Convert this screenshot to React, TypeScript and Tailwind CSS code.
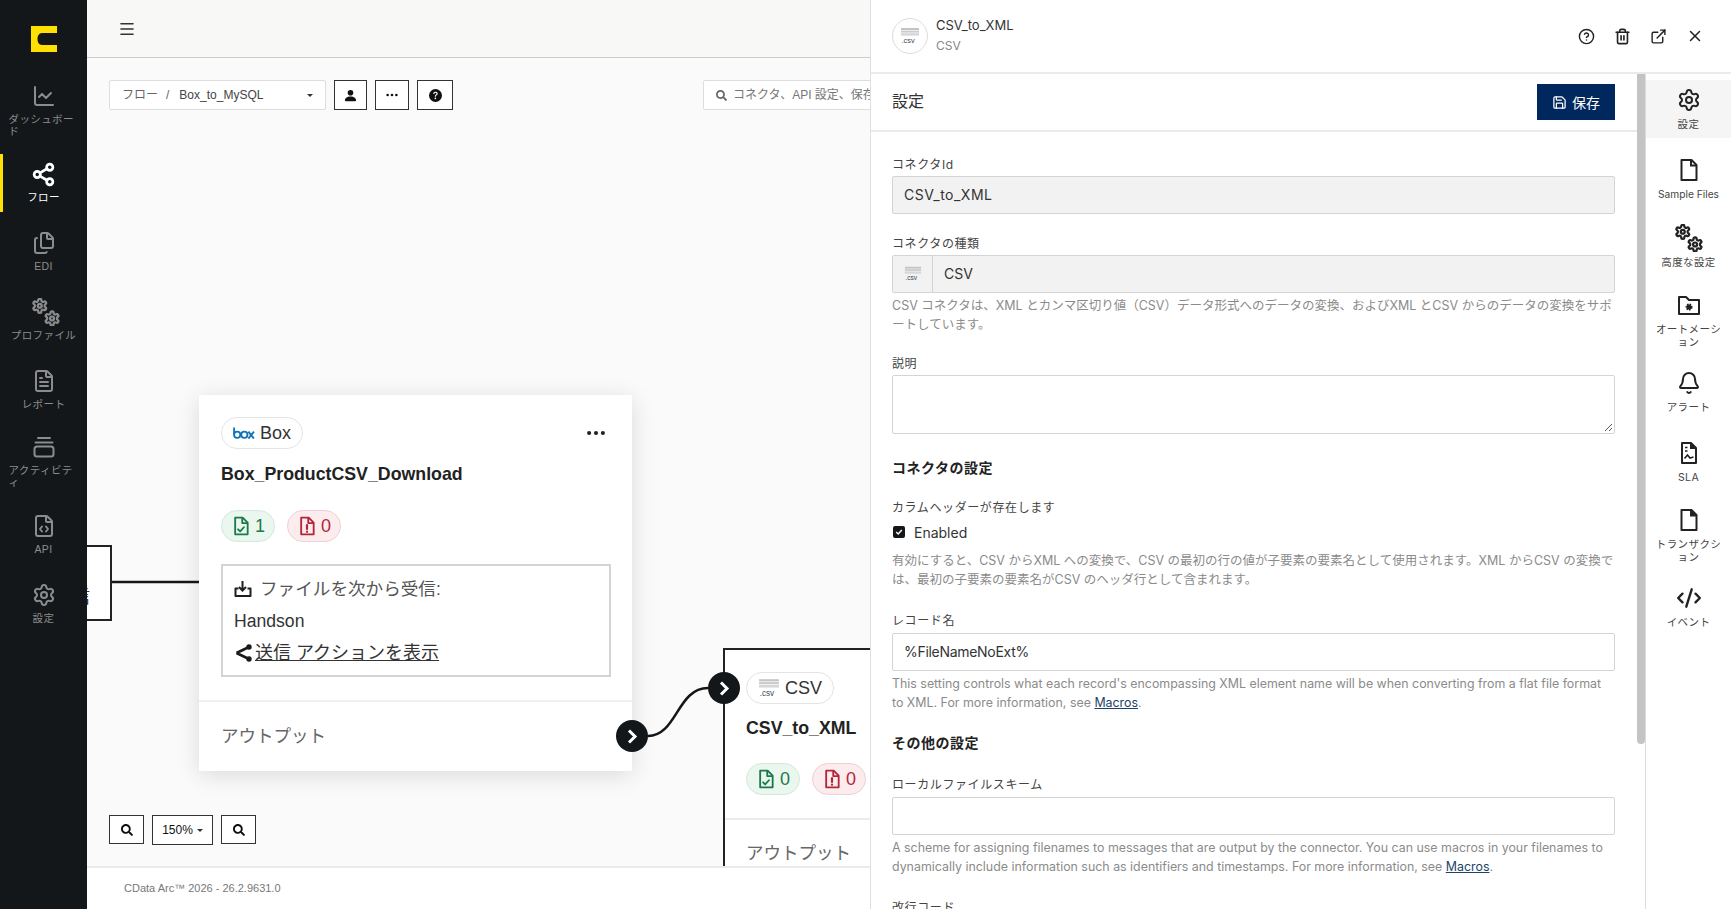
import type { ReactNode } from "react";
import {
  Bell,
  ChartLine,
  CircleHelp,
  CodeXml,
  ExternalLink,
  FileCode,
  FileText,
  Files,
  Menu,
  Save,
  Settings,
  Share2,
  Trash2,
  X,
} from "lucide-react";
import { BsPersonFill, BsQuestionCircleFill, BsThreeDots } from "react-icons/bs";
import { FaSearch } from "react-icons/fa";

const gearPath =
  "M12.22 2h-.44a2 2 0 0 0-2 2v.18a2 2 0 0 1-1 1.73l-.43.25a2 2 0 0 1-2 0l-.15-.08a2 2 0 0 0-2.73.73l-.22.38a2 2 0 0 0 .73 2.73l.15.1a2 2 0 0 1 1 1.72v.51a2 2 0 0 1-1 1.74l-.15.09a2 2 0 0 0-.73 2.73l.22.38a2 2 0 0 0 2.73.73l.15-.08a2 2 0 0 1 2 0l.43.25a2 2 0 0 1 1 1.73V20a2 2 0 0 0 2 2h.44a2 2 0 0 0 2-2v-.18a2 2 0 0 1 1-1.73l.43-.25a2 2 0 0 1 2 0l.15.08a2 2 0 0 0 2.73-.73l.22-.39a2 2 0 0 0-.73-2.73l-.15-.08a2 2 0 0 1-1-1.74v-.5a2 2 0 0 1 1-1.74l.15-.09a2 2 0 0 0 .73-2.73l-.22-.38a2 2 0 0 0-2.73-.73l-.15.08a2 2 0 0 1-2 0l-.43-.25a2 2 0 0 1-1-1.73V4a2 2 0 0 0-2-2z";

const Gears = () => (
  <svg width="28" height="28" viewBox="0 0 36 36" fill="none" stroke="currentColor" strokeWidth="3.2" className="shrink-0">
    <g transform="translate(-0.8 -0.8) scale(0.9)">
      <path d={gearPath} />
      <circle cx="12" cy="12" r="2.8" />
    </g>
    <g transform="translate(15 15.5) scale(0.9)">
      <path d={gearPath} />
      <circle cx="12" cy="12" r="2.8" />
    </g>
  </svg>
);

const ActivityIcon = () => (
  <svg width="24" height="24" viewBox="0 0 24 24" fill="none" stroke="currentColor" strokeWidth="2" strokeLinecap="round">
    <path d="M6 3h12M3.5 7.5h17" />
    <rect x="2.5" y="11.5" width="19" height="10" rx="2.5" />
  </svg>
);

const FolderGear = () => (
  <svg width="24" height="24" viewBox="0 0 24 24" fill="none" stroke="currentColor" strokeWidth="2">
    <path d="M2 4h7l3 3h10v14H2z" strokeLinejoin="round" />
    <circle cx="12" cy="14" r="2.6" fill="currentColor" strokeWidth="1.8" strokeDasharray="1.5 1" />
  </svg>
);

const SlaFile = () => (
  <svg width="24" height="24" viewBox="0 0 24 24" fill="none" stroke="currentColor" strokeWidth="2">
    <path d="M5 2h9l5 5v15H5z" strokeLinejoin="round" />
    <path d="M14 2v5h5" fill="currentColor" />
    <path d="M8 6.5h2.5M8 10h2.5" strokeWidth="1.6" />
    <path d="M7.5 17.5l3-3.5 2.5 3 3.5-1" strokeWidth="1.6" />
  </svg>
);

const TransactionFile = () => (
  <svg width="24" height="24" viewBox="0 0 24 24" fill="none" stroke="currentColor" strokeWidth="2">
    <path d="M4.5 2h10l5 5v15h-15z" strokeLinejoin="round" />
    <path d="M14 2v5.5h5.5" fill="currentColor" />
  </svg>
);

const SampleFile = () => (
  <svg width="24" height="24" viewBox="0 0 24 24" fill="none" stroke="currentColor" strokeWidth="2">
    <path d="M4.5 2h10l5 5v15h-15z" strokeLinejoin="round" />
    <path d="M14 2v5.5h5.5" />
  </svg>
);

const BoxLogo = () => (
  <svg width="22" height="12" viewBox="0 0 24 13" fill="none" stroke="#1072b8" strokeWidth="2" className="shrink-0">
    <path d="M1.2 0.5v8" />
    <circle cx="4.6" cy="8.4" r="3.4" />
    <circle cx="12.4" cy="8.4" r="3.4" />
    <path d="M16.8 5l6 7.6M22.8 5l-6 7.6" />
  </svg>
);

const CsvLogo = ({ size = 20 }: { size?: number }) => (
  <svg width={size} height={size} viewBox="0 0 20 20" className="shrink-0">
    <rect x="1" y="2" width="18" height="2" fill="#c4c4c4" />
    <rect x="1" y="4.6" width="18" height="2" fill="#cccccc" />
    <rect x="1" y="7.2" width="18" height="2.4" fill="#d6d6d6" />
    <text x="1.5" y="17" fontSize="7.4" fill="#3c4b5f" fontFamily="Liberation Sans">.csv</text>
  </svg>
);

const StatusFile = ({ type }: { type: "ok" | "err" }) => (
  <svg width="20" height="20" viewBox="0 0 24 24" fill="none" stroke="currentColor" strokeWidth="2.2" strokeLinejoin="round">
    <path d="M5 2h9l6 6v14H5z" />
    <path d="M13.5 2v6.5H20" />
    {type === "ok" ? (
      <path d="M8.5 16l2.5 2.5 4.5-5" strokeLinecap="round" />
    ) : (
      <>
        <path d="M12 11v4.5" strokeLinecap="round" strokeWidth="2.6" />
        <path d="M12 18.6v.4" strokeLinecap="round" strokeWidth="2.6" />
      </>
    )}
  </svg>
);

const SendIcon = () => (
  <svg width="19" height="18" viewBox="0 0 19 18" fill="#1a1a1a" stroke="#1a1a1a" strokeWidth="2.6" className="shrink-0">
    <path d="M2.5 9L15 3M2.5 9L15 15" fill="none" />
    <circle cx="15" cy="3" r="1.4" />
    <circle cx="15" cy="15" r="1.4" />
  </svg>
);

const ReceiveIcon = () => (
  <svg width="18" height="18" viewBox="0 0 18 18" fill="none" stroke="#1f1f1f" strokeWidth="2" className="shrink-0">
    <path d="M8.5 1v9M5 7l3.5 3.5L12 7" />
    <path d="M4.5 8.5H1.5v7.5h15V8.5h-3" strokeLinejoin="round" />
  </svg>
);

const sideItems = [
  { label: "ダッシュボー\nド", icon: <ChartLine size={24} strokeWidth={2} />, box: "h-[68px] mb-[10px]", align: "text-left" },
  { label: "フロー", icon: <Share2 size={25} strokeWidth={2.6} />, box: "h-[58px] mb-[11px]", align: "text-center", active: true },
  { label: "EDI", icon: <Files size={24} strokeWidth={2} />, box: "h-[58px] mb-[11px]", align: "text-center" },
  { label: "プロファイル", icon: <div className="ml-1"><Gears /></div>, box: "h-[58px] mb-[11px]", align: "text-center" },
  { label: "レポート", icon: <FileText size={24} strokeWidth={2} />, box: "h-[58px] mb-[8px]", align: "text-center" },
  { label: "アクティビテ\nィ", icon: <ActivityIcon />, box: "h-[68px] mb-[11px]", align: "text-left" },
  { label: "API", icon: <FileCode size={24} strokeWidth={2} />, box: "h-[58px] mb-[11px]", align: "text-center" },
  { label: "設定", icon: <Settings size={24} strokeWidth={2} />, box: "h-[58px]", align: "text-center" },
];

const railItems = [
  { label: "設定", icon: <Settings size={24} strokeWidth={2} />, box: "h-[58px] mb-[12px] bg-[#f5f5f5]", text: "text-[10.5px] tracking-[0.4px]" },
  { label: "Sample Files", icon: <SampleFile />, box: "h-[58px] mb-[10px]", text: "text-[10.2px] tracking-[0px]" },
  { label: "高度な設定", icon: <Gears />, box: "h-[58px] mb-[9px]", text: "text-[10.5px] tracking-[0.4px]" },
  { label: "オートメーシ\nョン", icon: <FolderGear />, box: "h-[70px] mb-[8px]", text: "text-[10.5px] tracking-[0.4px]" },
  { label: "アラート", icon: <Bell size={24} strokeWidth={2} />, box: "h-[58px] mb-[12px]", text: "text-[10.5px] tracking-[0.4px]" },
  { label: "SLA", icon: <SlaFile />, box: "h-[58px] mb-[9px]", text: "text-[10.5px] tracking-[0.4px]" },
  { label: "トランザクシ\nョン", icon: <TransactionFile />, box: "h-[70px] mb-[8px]", text: "text-[10.5px] tracking-[0.4px]" },
  { label: "イベント", icon: <CodeXml size={26} strokeWidth={2.2} />, box: "h-[58px]", text: "text-[10.5px] tracking-[0.4px]" },
];

function Sidebar() {
  return (
    <aside className="w-[87px] shrink-0 bg-[#14171a] flex flex-col">
      <div className="h-[76px] shrink-0 pl-[31px] pt-[26px]">
        <svg width="26" height="26" viewBox="0 0 26 26">
          <path d="M0 0H26V7H11C8 7 6.5 10 6.5 13C6.5 16 8 19 11 19H26V26H0Z" fill="#ffe000" />
        </svg>
      </div>
      {sideItems.map((item) => (
        <div
          key={item.label}
          className={`${item.box} flex flex-col items-center pt-2 border-l-[3px] pr-[3px] ${
            item.active ? "border-[#ffe000] text-white" : "border-transparent text-[#8c8c8c]"
          }`}
        >
          <div className="h-6 flex items-center justify-center">{item.icon}</div>
          <div className={`${item.align} mt-[5px] w-[70px] text-[10.5px] leading-[12px] whitespace-pre-line tracking-[0.4px]`}>
            {item.label}
          </div>
        </div>
      ))}
    </aside>
  );
}

function Pill({ logo, name, className }: { logo: ReactNode; name: string; className: string }) {
  return (
    <div className={`${className} h-8 inline-flex items-center gap-[5px] rounded-full border border-[#e4e4e4] bg-white pl-[11px] text-[18px] text-[#333]`}>
      {logo}
      {name}
    </div>
  );
}

function Badges({ ok, err }: { ok: number; err: number }) {
  return (
    <div className="flex gap-3">
      <div className="w-[54px] h-8 flex items-center justify-center gap-1 rounded-full border border-[#d3e9dc] bg-[#eaf7ef] text-[#1c7a49] text-[18px]">
        <StatusFile type="ok" />
        {ok}
      </div>
      <div className="w-[54px] h-8 flex items-center justify-center gap-1 rounded-full border border-[#efd0d4] bg-[#fcecee] text-[#b3263a] text-[18px]">
        <StatusFile type="err" />
        {err}
      </div>
    </div>
  );
}

function NodeHandle({ className }: { className: string }) {
  return (
    <div className={`absolute ${className} w-8 h-8 rounded-full bg-[#14171a] flex items-center justify-center`}>
      <svg width="13" height="15" viewBox="0 0 13 15" fill="none" stroke="white" strokeWidth="3">
        <path d="M3 1.5L9 7.5L3 13.5" />
      </svg>
    </div>
  );
}

function ToolButton({ children, className }: { children: ReactNode; className: string }) {
  return (
    <div className={`${className} flex items-center justify-center border border-[#333] bg-white text-[#111]`}>
      {children}
    </div>
  );
}

function Canvas() {
  return (
    <div className="relative flex-1 min-h-0 overflow-hidden bg-[#fafafa]">
      {/* toolbar */}
      <div className="absolute left-[22px] top-[22px] flex gap-2 z-20">
        <div className="w-[217px] h-[30px] flex items-center border border-[#dddddd] rounded-[2px] bg-white pl-3 pr-3 text-[12px] text-[#444]">
          <span className="text-[#666]">フロー</span>
          <span className="ml-2 text-[#666]">/</span>
          <span className="ml-[10px] flex-1">Box_to_MySQL</span>
          <span className="w-0 h-0 border-x-[3px] border-x-transparent border-t-[3px] border-t-[#333]" />
        </div>
        <ToolButton className="w-[33px] h-[30px]"><BsPersonFill size={15} /></ToolButton>
        <ToolButton className="w-[34px] h-[30px]"><BsThreeDots size={14} /></ToolButton>
        <ToolButton className="w-[36px] h-[30px]"><BsQuestionCircleFill size={13} /></ToolButton>
      </div>
      <div className="absolute left-[616px] top-[22px] w-[260px] h-[30px] flex items-center gap-[6px] border border-[#dddddd] rounded-[2px] bg-white pl-3 text-[12px] text-[#777] whitespace-nowrap z-20">
        <FaSearch size={11} className="text-[#666] shrink-0" />
        <span>コネクタ、API 設定、保存済みの項目を検索</span>
      </div>

      {/* left stub node */}
      <div className="absolute left-[-40px] top-[487px] w-[65px] h-[76px] border-2 border-[#222] bg-white flex items-center justify-end pr-[18px] text-[18px] text-[#333] overflow-hidden">
        <span className="-translate-x-[2px] translate-y-[14px]">信</span>
      </div>
      <svg className="absolute left-0 top-0" width="783" height="808" fill="none" stroke="#14171a">
        <path d="M25 524H113" strokeWidth="2.5" />
        <path d="M561 678C590 678 590 630 621 630" strokeWidth="2.5" />
      </svg>

      {/* Box node */}
      <div className="absolute left-[112px] top-[337px] w-[433px] h-[376px] bg-white shadow-[0_4px_22px_rgba(0,0,0,0.13)]">
        <Pill logo={<BoxLogo />} name="Box" className="absolute left-[22px] top-[22px] w-[82px]" />
        <div className="absolute right-[25px] top-[27px]"><BsThreeDots size={22} className="text-[#222]" /></div>
        <div className="absolute left-[22px] top-[68px] text-[17.75px] leading-[22px] font-bold text-[#222]">Box_ProductCSV_Download</div>
        <div className="absolute left-[22px] top-[115px]"><Badges ok={1} err={0} /></div>
        <div className="absolute left-[22px] top-[169px] w-[390px] h-[113px] border-2 border-[#d4d4d4] px-[11px] pt-[7px] text-[17.6px] leading-[32px] text-[#333]">
          <div className="flex items-center gap-[8px] text-[#555]"><ReceiveIcon />ファイルを次から受信:</div>
          <div>Handson</div>
          <div className="flex items-center gap-[2px]">
            <SendIcon />
            <span className="underline text-[18px]">送信 アクションを表示</span>
          </div>
        </div>
        <div className="absolute left-0 right-0 top-[305px] border-t-2 border-[#f0f0f0]" />
        <div className="absolute left-[22px] top-[328px] text-[17.5px] leading-[26px] text-[#666]">アウトプット</div>
      </div>
      <NodeHandle className="left-[529px] top-[662px]" />

      {/* CSV node */}
      <div className="absolute left-[636px] top-[590px] w-[300px] h-[260px] border-2 border-[#222] bg-white">
        <Pill logo={<CsvLogo size={22} />} name="CSV" className="absolute left-[21px] top-[22px] w-[88px]" />
        <div className="absolute left-[21px] top-[67px] text-[17.75px] leading-[22px] font-bold text-[#222]">CSV_to_XML</div>
        <div className="absolute left-[21px] top-[113px]"><Badges ok={0} err={0} /></div>
        <div className="absolute left-0 right-0 top-[168px] border-t-2 border-[#ececec]" />
        <div className="absolute left-[21px] top-[190px] text-[17.5px] leading-[26px] text-[#666]">アウトプット</div>
      </div>
      <NodeHandle className="left-[621px] top-[614px]" />

      {/* zoom controls */}
      <div className="absolute left-[22px] top-[757px] flex gap-2 items-start z-20">
        <ToolButton className="w-[35px] h-[29px]"><FaSearch size={12} /></ToolButton>
        <ToolButton className="w-[61px] h-[30px] text-[12px] gap-1 bg-[#fafafa]">
          150%
          <span className="w-0 h-0 border-x-[3px] border-x-transparent border-t-[3px] border-t-[#333]" />
        </ToolButton>
        <ToolButton className="w-[35px] h-[29px]"><FaSearch size={12} /></ToolButton>
      </div>
    </div>
  );
}

const Label = ({ children, className = "" }: { children: ReactNode; className?: string }) => (
  <div className={`${className} text-[12px] leading-[16px] text-[#444] mb-[3px] tracking-[0.6px]`}>{children}</div>
);

const Help = ({ children, className = "" }: { children: ReactNode; className?: string }) => (
  <p className={`${className} leading-[19px] text-[#8b8b8b]`}>{children}</p>
);

const Heading = ({ children, className = "" }: { children: ReactNode; className?: string }) => (
  <h3 className={`${className} text-[14px] leading-[18px] font-bold text-[#222] tracking-[0.5px]`}>{children}</h3>
);

const Macros = () => <span className="underline text-[#1d4468]">Macros</span>;

function Panel() {
  return (
    <section className="w-[861px] shrink-0 flex flex-col bg-white border-l border-[#dfdfdf] font-['Inter','Noto_Sans_CJK_JP',sans-serif]">
      <header className="h-[74px] shrink-0 flex items-center pl-[21px] pr-[27px] border-b-2 border-[#ebebeb]">
        <div className="w-9 h-9 rounded-full border border-[#dcdcdc] flex items-center justify-center">
          <CsvLogo size={20} />
        </div>
        <div className="ml-2 flex-1 -mt-[2px]">
          <div className="text-[13px] leading-[18px] text-[#333]">CSV_to_XML</div>
          <div className="mt-[3px] text-[12px] leading-[18px] text-[#888]">CSV</div>
        </div>
        <div className="flex items-center gap-[19px] text-[#222]">
          <CircleHelp size={17} />
          <Trash2 size={17} strokeWidth={2.3} />
          <ExternalLink size={17} />
          <X size={18} />
        </div>
      </header>
      <div className="flex flex-1 min-h-0">
        <div className="w-[766px] overflow-hidden">
          <div className="h-[58px] flex items-center justify-between pl-[21px] pr-[22px] border-b-2 border-[#ebebeb]">
            <h2 className="text-[16px] text-[#333] -mt-[2px]">設定</h2>
            <button className="w-[78px] h-9 flex items-center justify-center gap-[5px] bg-[#00285e] text-white text-[14px]">
              <Save size={15} />
              保存
            </button>
          </div>
          <div className="pl-[21px] pr-[22px] pt-[25px]">
            <Label>コネクタId</Label>
            <div className="h-[38px] flex items-center px-[11px] pb-[2px] bg-[#f2f2f2] border border-[#d4d4d4] rounded-[2px] text-[14px] tracking-[0.5px] text-[#333]">CSV_to_XML</div>

            <Label className="mt-[22px]">コネクタの種類</Label>
            <div className="h-[38px] flex items-center bg-[#f2f2f2] border border-[#d4d4d4] rounded-[2px] text-[14px] text-[#333]">
              <div className="w-[40px] h-full flex items-center justify-center border-r border-[#d4d4d4]"><CsvLogo size={18} /></div>
              <span className="pl-[11px] pb-[2px]">CSV</span>
            </div>
            <Help className="mt-[3px] text-[12.5px]">CSV コネクタは、XML とカンマ区切り値（CSV）データ形式へのデータの変換、およびXML とCSV からのデータの変換をサポートしています。</Help>

            <Label className="mt-[22px]">説明</Label>
            <div className="relative h-[59px] border border-[#d4d4d4] rounded-[2px] bg-white">
              <svg className="absolute right-[1px] bottom-[1px]" width="9" height="9" viewBox="0 0 9 9" stroke="#555" strokeWidth="1">
                <path d="M1 8L8 1M5 8L8 5" />
              </svg>
            </div>

            <Heading className="mt-[25px]">コネクタの設定</Heading>
            <Label className="mt-[23px]">カラムヘッダーが存在します</Label>
            <div className="mt-[6px] flex items-center gap-[9px] h-5 text-[14px] text-[#333]">
              <div className="w-3 h-3 ml-px rounded-[2px] bg-[#14171a] flex items-center justify-center">
                <svg width="8" height="8" viewBox="0 0 8 8" fill="none" stroke="white" strokeWidth="1.4"><path d="M1.2 4l2 2 3.6-4" /></svg>
              </div>
              Enabled
            </div>
            <Help className="mt-[9px] text-[12.5px]">有効にすると、CSV からXML への変換で、CSV の最初の行の値が子要素の要素名として使用されます。XML からCSV の変換では、最初の子要素の要素名がCSV のヘッダ行として含まれます。</Help>

            <Label className="mt-[24px]">レコード名</Label>
            <div className="mt-[4px] h-[38px] flex items-center px-[11px] pb-[2px] border border-[#d4d4d4] rounded-[2px] text-[14px] tracking-[-0.3px] text-[#333]">%FileNameNoExt%</div>
            <Help className="mt-[3px] text-[12.4px]">This setting controls what each record's encompassing XML element name will be when converting from a flat file format to XML. For more information, see <Macros />.</Help>

            <Heading className="mt-[22px]">その他の設定</Heading>
            <Label className="mt-[25px]">ローカルファイルスキーム</Label>
            <div className="mt-[4px] h-[38px] border border-[#d4d4d4] rounded-[2px]" />
            <Help className="mt-[3px] text-[12.4px]">A scheme for assigning filenames to messages that are output by the connector. You can use macros in your filenames to dynamically include information such as identifiers and timestamps. For more information, see <Macros />.</Help>

            <Label className="mt-[24px]">改行コード</Label>
          </div>
        </div>
        <div className="w-[8px] shrink-0 self-start h-[670px] bg-[#c4c4c4] rounded-b-[4px]" />
        <nav className="flex-1 border-l border-[#dcdcdc] pt-[6px] text-[#222]">
          {railItems.map((item) => (
            <div key={item.label} className={`${item.box} flex flex-col items-center pt-2`}>
              <div className="h-6 flex items-center justify-center">{item.icon}</div>
              <div className={`${item.text} mt-[6px] leading-[13px] whitespace-pre-line text-center text-[#444]`}>{item.label}</div>
            </div>
          ))}
        </nav>
      </div>
    </section>
  );
}

export default function App() {
  return (
    <div className="w-[1731px] h-[909px] flex overflow-hidden bg-white font-['Liberation_Sans','Noto_Sans_CJK_JP',sans-serif]">
      <Sidebar />
      <main className="flex-1 min-w-0 flex flex-col">
        <div className="h-[58px] shrink-0 flex items-center pl-[31px] bg-[#f8f8f6] border-b border-[#cccccc]">
          <Menu size={18} strokeWidth={2.2} className="text-[#333]" />
        </div>
        <Canvas />
        <footer className="h-[43px] shrink-0 flex items-center pl-[37px] border-t-2 border-[#ebebeb] bg-white text-[11px] text-[#777]">
          CData Arc™ 2026 - 26.2.9631.0
        </footer>
      </main>
      <Panel />
    </div>
  );
}
